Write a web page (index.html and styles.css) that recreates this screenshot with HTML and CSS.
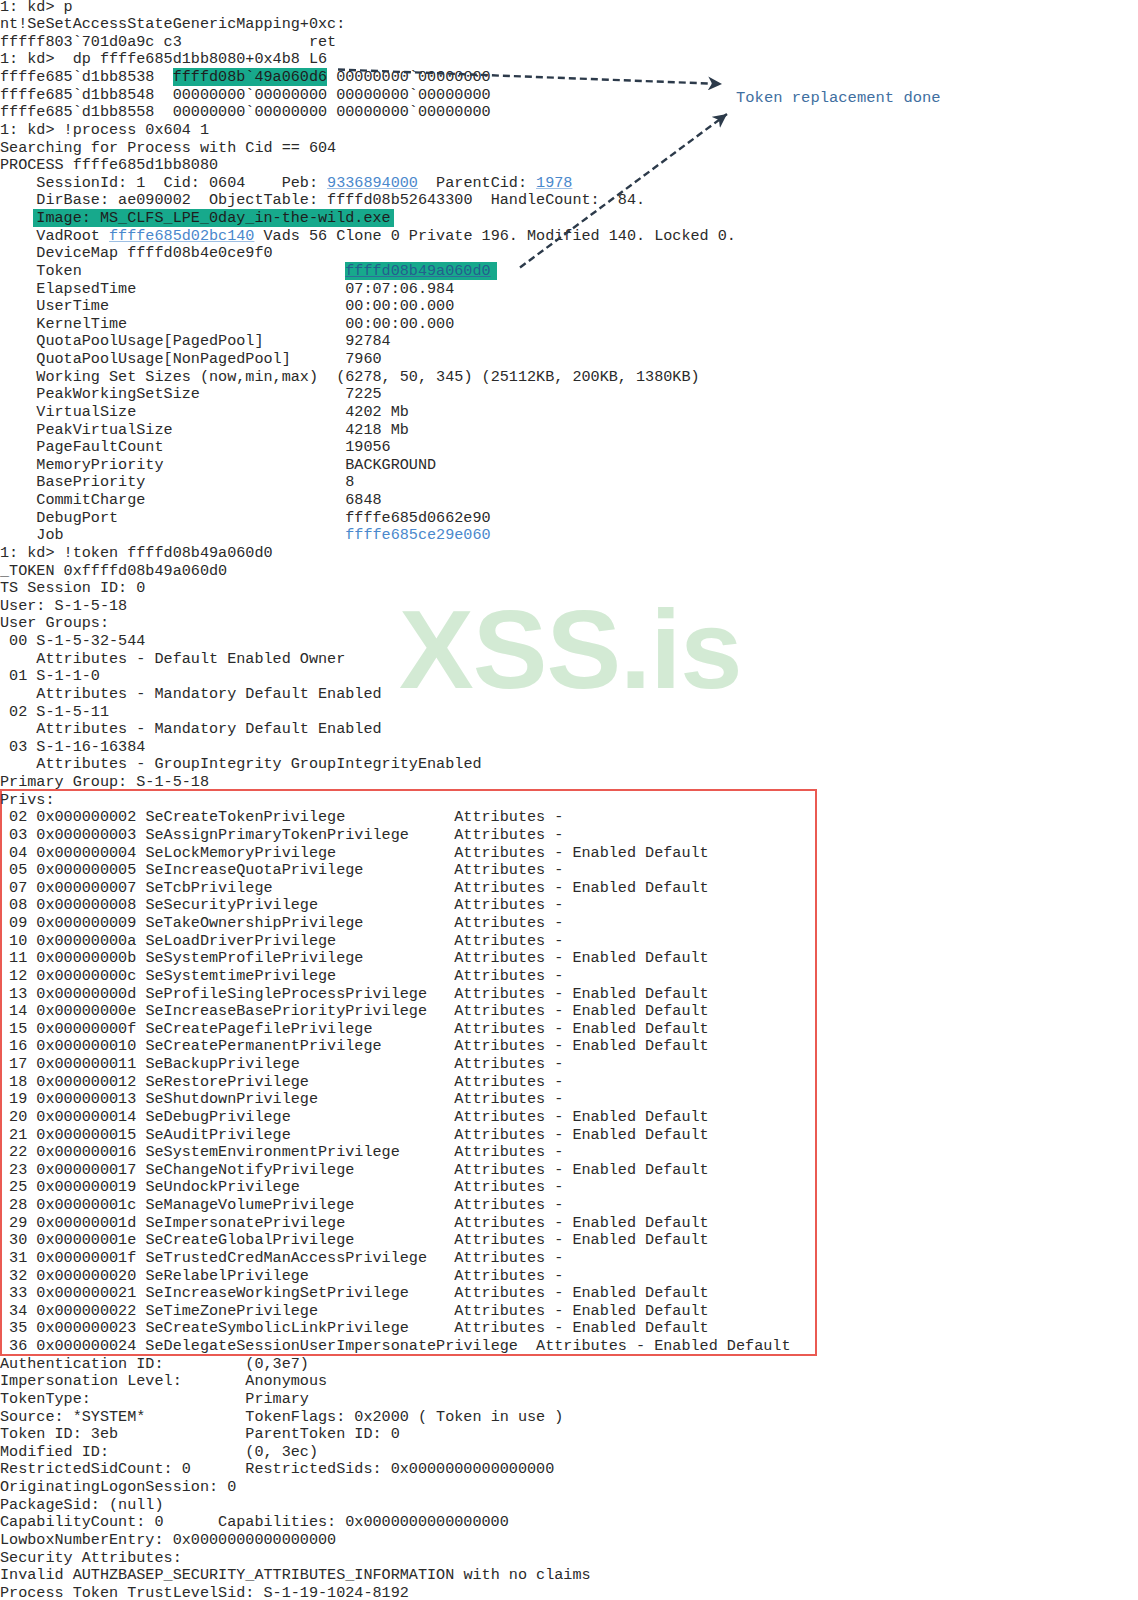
FILE: index.html
```html
<!DOCTYPE html>
<html lang="en">
<head>
<meta charset="utf-8">
<title>kd session</title>
<link rel="stylesheet" href="styles.css">
</head>
<body>
<div class="screen">
<pre class="out">1: kd&gt; p
nt!SeSetAccessStateGenericMapping+0xc:
<span class="c34">fffff803`701d0a9c c3</span>ret
1: kd&gt;  dp ffffe685d1bb8080+0x4b8 L6
ffffe685`d1bb8538  <span class="hl">ffffd08b`49a060d6</span> 00000000`00000000
ffffe685`d1bb8548  00000000`00000000 00000000`00000000
ffffe685`d1bb8558  00000000`00000000 00000000`00000000
1: kd&gt; !process 0x604 1
Searching for Process with Cid == 604
PROCESS ffffe685d1bb8080
    SessionId: 1  Cid: 0604    Peb: <span class="lnk">9336894000</span>  ParentCid: <span class="lnk">1978</span>
    DirBase: ae090002  ObjectTable: ffffd08b52643300  HandleCount:  84.
    <span class="hl hl-img">Image: MS_CLFS_LPE_0day_in-the-wild.exe</span>
    VadRoot <span class="lnk">ffffe685d02bc140</span> Vads 56 Clone 0 Private 196. Modified 140. Locked 0.
    DeviceMap ffffd08b4e0ce9f0
    <span class="c34">Token</span><span class="hl hl-tok">ffffd08b49a060d0</span>
    <span class="c34">ElapsedTime</span>07:07:06.984
    <span class="c34">UserTime</span>00:00:00.000
    <span class="c34">KernelTime</span>00:00:00.000
    <span class="c34">QuotaPoolUsage[PagedPool]</span>92784
    <span class="c34">QuotaPoolUsage[NonPagedPool]</span>7960
    Working Set Sizes (now,min,max)  (6278, 50, 345) (25112KB, 200KB, 1380KB)
    <span class="c34">PeakWorkingSetSize</span>7225
    <span class="c34">VirtualSize</span>4202 Mb
    <span class="c34">PeakVirtualSize</span>4218 Mb
    <span class="c34">PageFaultCount</span>19056
    <span class="c34">MemoryPriority</span>BACKGROUND
    <span class="c34">BasePriority</span>8
    <span class="c34">CommitCharge</span>6848
    <span class="c34">DebugPort</span>ffffe685d0662e90
    <span class="c34">Job</span><span class="lnk lnk-plain">ffffe685ce29e060</span>
1: kd&gt; !token ffffd08b49a060d0
_TOKEN 0xffffd08b49a060d0
TS Session ID: 0
User: S-1-5-18
User Groups:
 00 S-1-5-32-544
    Attributes - Default Enabled Owner
 01 S-1-1-0
    Attributes - Mandatory Default Enabled
 02 S-1-5-11
    Attributes - Mandatory Default Enabled
 03 S-1-16-16384
    Attributes - GroupIntegrity GroupIntegrityEnabled
Primary Group: S-1-5-18</pre>
<div class="privs">
<pre class="out">Privs:
 02 0x000000002 <span class="c34">SeCreateTokenPrivilege</span>Attributes -
 03 0x000000003 <span class="c34">SeAssignPrimaryTokenPrivilege</span>Attributes -
 04 0x000000004 <span class="c34">SeLockMemoryPrivilege</span>Attributes - Enabled Default
 05 0x000000005 <span class="c34">SeIncreaseQuotaPrivilege</span>Attributes -
 07 0x000000007 <span class="c34">SeTcbPrivilege</span>Attributes - Enabled Default
 08 0x000000008 <span class="c34">SeSecurityPrivilege</span>Attributes -
 09 0x000000009 <span class="c34">SeTakeOwnershipPrivilege</span>Attributes -
 10 0x00000000a <span class="c34">SeLoadDriverPrivilege</span>Attributes -
 11 0x00000000b <span class="c34">SeSystemProfilePrivilege</span>Attributes - Enabled Default
 12 0x00000000c <span class="c34">SeSystemtimePrivilege</span>Attributes -
 13 0x00000000d <span class="c34">SeProfileSingleProcessPrivilege</span>Attributes - Enabled Default
 14 0x00000000e <span class="c34">SeIncreaseBasePriorityPrivilege</span>Attributes - Enabled Default
 15 0x00000000f <span class="c34">SeCreatePagefilePrivilege</span>Attributes - Enabled Default
 16 0x000000010 <span class="c34">SeCreatePermanentPrivilege</span>Attributes - Enabled Default
 17 0x000000011 <span class="c34">SeBackupPrivilege</span>Attributes -
 18 0x000000012 <span class="c34">SeRestorePrivilege</span>Attributes -
 19 0x000000013 <span class="c34">SeShutdownPrivilege</span>Attributes -
 20 0x000000014 <span class="c34">SeDebugPrivilege</span>Attributes - Enabled Default
 21 0x000000015 <span class="c34">SeAuditPrivilege</span>Attributes - Enabled Default
 22 0x000000016 <span class="c34">SeSystemEnvironmentPrivilege</span>Attributes -
 23 0x000000017 <span class="c34">SeChangeNotifyPrivilege</span>Attributes - Enabled Default
 25 0x000000019 <span class="c34">SeUndockPrivilege</span>Attributes -
 28 0x00000001c <span class="c34">SeManageVolumePrivilege</span>Attributes -
 29 0x00000001d <span class="c34">SeImpersonatePrivilege</span>Attributes - Enabled Default
 30 0x00000001e <span class="c34">SeCreateGlobalPrivilege</span>Attributes - Enabled Default
 31 0x00000001f <span class="c34">SeTrustedCredManAccessPrivilege</span>Attributes -
 32 0x000000020 <span class="c34">SeRelabelPrivilege</span>Attributes -
 33 0x000000021 <span class="c34">SeIncreaseWorkingSetPrivilege</span>Attributes - Enabled Default
 34 0x000000022 <span class="c34">SeTimeZonePrivilege</span>Attributes - Enabled Default
 35 0x000000023 <span class="c34">SeCreateSymbolicLinkPrivilege</span>Attributes - Enabled Default
 36 0x000000024 SeDelegateSessionUserImpersonatePrivilege  Attributes - Enabled Default</pre>
</div>
<pre class="out"><span class="c27">Authentication ID:</span>(0,3e7)
<span class="c27">Impersonation Level:</span>Anonymous
<span class="c27">TokenType:</span>Primary
<span class="c27">Source: *SYSTEM*</span>TokenFlags: 0x2000 ( Token in use )
<span class="c27">Token ID: 3eb</span>ParentToken ID: 0
<span class="c27">Modified ID:</span>(0, 3ec)
<span class="c27">RestrictedSidCount: 0</span>RestrictedSids: 0x0000000000000000
OriginatingLogonSession: 0
PackageSid: (null)
<span class="c24">CapabilityCount: 0</span>Capabilities: 0x0000000000000000
LowboxNumberEntry: 0x0000000000000000
Security Attributes:
Invalid AUTHZBASEP_SECURITY_ATTRIBUTES_INFORMATION with no claims
Process Token TrustLevelSid: S-1-19-1024-8192</pre>
</div>

<div class="watermark">XSS.is</div>

<svg class="arrows" width="1138" height="300" viewBox="0 0 1138 300" aria-hidden="true">
  <defs>
    <marker id="ah" markerUnits="userSpaceOnUse" markerWidth="16" markerHeight="14" refX="14" refY="7" orient="auto">
      <path d="M0,0 L14,7 L0,14 L4,7 Z" fill="#2c3a4a"/>
    </marker>
  </defs>
  <line x1="338" y1="69.5" x2="722" y2="84" stroke="#2c3a4a" stroke-width="2.4" stroke-dasharray="7 4" marker-end="url(#ah)"/>
  <line x1="520" y1="267.5" x2="727" y2="114" stroke="#2c3a4a" stroke-width="2.4" stroke-dasharray="7 4" marker-end="url(#ah)"/>
</svg>
<div class="note">Token replacement done</div>
</body>
</html>
```

FILE: styles.css
```css
html, body {
  margin: 0;
  padding: 0;
  background: #ffffff;
}

.screen {
  margin-top: -1.5px;
}

.out {
  margin: 0;
  font-family: "Liberation Mono", "Courier New", monospace;
  font-size: 15.15px;
  line-height: 17.62px;
  color: #2a2a2a;
  white-space: pre;
}

.c34 { display: inline-block; min-width: 34ch; }
.c27 { display: inline-block; min-width: 27ch; }
.c24 { display: inline-block; min-width: 24ch; }

.hl {
  background: #17a98c;
  color: #1e1e1e;
}

.hl-img {
  padding: 0 3px;
  margin: 0 -3px;
}

.hl-tok {
  padding-right: 6px;
  color: #235f8c;
  text-decoration: underline;
  text-decoration-color: #2f6d98;
}

.lnk {
  color: #4a88cc;
  text-decoration: underline;
  text-decoration-color: #9dbfe4;
}

.lnk-plain {
  text-decoration: none;
}

.privs {
  width: 817px;
  margin-top: -3px;
  padding-top: 3px;
  box-shadow: inset 0 0 0 2px #ea5a52;
}

.watermark {
  position: absolute;
  left: 399px;
  top: 594px;
  font-family: "Liberation Sans", Arial, sans-serif;
  font-weight: bold;
  font-size: 112px;
  line-height: 112px;
  color: #d3ead4;
  letter-spacing: -1px;
  pointer-events: none;
}

.arrows {
  position: absolute;
  left: 0;
  top: 0;
  pointer-events: none;
}

.note {
  position: absolute;
  left: 736px;
  top: 89px;
  font-family: "Liberation Mono", "Courier New", monospace;
  font-size: 15.5px;
  line-height: 18px;
  color: #3f6f9f;
  white-space: pre;
}
```
